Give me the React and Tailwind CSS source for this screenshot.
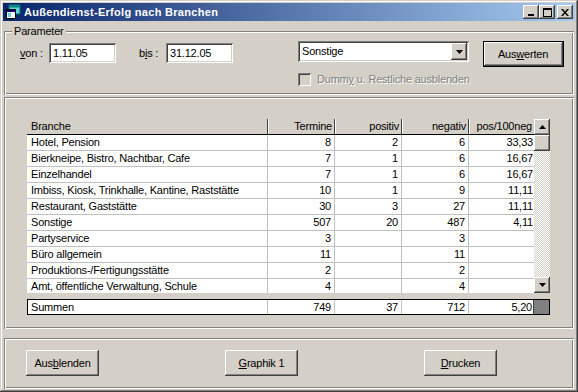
import React from "react";

const raised =
  "shadow-[inset_-1px_-1px_#404040,inset_1px_1px_#ffffff,inset_-2px_-2px_#808080,inset_2px_2px_#d4d0c8]";
const sunken =
  "shadow-[inset_1px_1px_#808080,inset_-1px_-1px_#ffffff,inset_2px_2px_#404040,inset_-2px_-2px_#d4d0c8]";
const etched =
  "shadow-[inset_1px_1px_#808080,inset_-1px_-1px_#ffffff,inset_2px_2px_#ffffff,inset_-2px_-2px_#808080]";

const rows = [
  ["Hotel, Pension", "8", "2", "6", "33,33"],
  ["Bierkneipe, Bistro, Nachtbar, Cafe", "7", "1", "6", "16,67"],
  ["Einzelhandel", "7", "1", "6", "16,67"],
  ["Imbiss, Kiosk, Trinkhalle, Kantine, Raststätte", "10", "1", "9", "11,11"],
  ["Restaurant, Gaststätte", "30", "3", "27", "11,11"],
  ["Sonstige", "507", "20", "487", "4,11"],
  ["Partyservice", "3", "", "3", ""],
  ["Büro allgemein", "11", "", "11", ""],
  ["Produktions-/Fertigungsstätte", "2", "", "2", ""],
  ["Amt, öffentliche Verwaltung, Schule", "4", "", "4", ""],
];

function Btn({ children, className = "" }) {
  return (
    <div
      className={`flex items-center justify-center bg-[#d4d0c8] text-black ${raised} ${className}`}
    >
      {children}
    </div>
  );
}

function Arrow({ down }) {
  return (
    <svg width="7" height="4" viewBox="0 0 7 4">
      {down ? (
        <polygon points="0,0 7,0 3.5,4" fill="#000" />
      ) : (
        <polygon points="0,4 7,4 3.5,0" fill="#000" />
      )}
    </svg>
  );
}

export default function App() {
  return (
    <div
      className={`w-[578px] h-[392px] bg-[#d4d0c8] p-[3px] flex flex-col font-['Liberation_Sans',Arial,sans-serif] text-[11px] leading-[13px] tracking-[-0.2px] text-black overflow-hidden shadow-[inset_-1px_-1px_#404040,inset_1px_1px_#d4d0c8,inset_-2px_-2px_#808080,inset_2px_2px_#ffffff]`}
    >
      {/* Title bar */}
      <div className="h-[18px] flex items-center bg-[linear-gradient(to_right,#0a246a,#a6caf0)] pl-[2px] pr-[2px]">
        <svg width="16" height="16" viewBox="0 0 16 16" className="shrink-0">
          <rect x="4" y="1" width="11" height="9" fill="#5fd3d3" stroke="#006b6b" strokeWidth="1" />
          <rect x="4.5" y="1.5" width="10" height="2" fill="#008080" />
          <rect x="1.5" y="5.5" width="9" height="9" fill="#ffffff" stroke="#000" strokeWidth="1" />
          <rect x="2" y="6" width="8" height="2" fill="#000080" />
          <rect x="3" y="9" width="3" height="4" fill="#5fd3d3" />
        </svg>
        <span className="ml-[3px] text-white font-bold text-[11px] tracking-[0.3px]">
          Außendienst-Erfolg nach Branchen
        </span>
        <div className="ml-auto flex items-center">
          <Btn className="w-[16px] h-[14px]">
            <div className="w-[6px] h-[2px] bg-black mt-[6px] mr-[1px]" />
          </Btn>
          <Btn className="w-[16px] h-[14px]">
            <div className="w-[9px] h-[9px] border border-black border-t-2" />
          </Btn>
          <Btn className="w-[16px] h-[14px] ml-[2px]">
            <svg width="8" height="7" viewBox="0 0 8 7">
              <path d="M0 0h2l2 2.5L6 0h2L5 3.5 8 7H6L4 4.5 2 7H0l3-3.5z" fill="#000" />
            </svg>
          </Btn>
        </div>
      </div>

      {/* Parameter group */}
      <div className={`relative mt-[10px] mx-[1px] h-[64px] ${etched} flex pl-[16px] pt-[10px]`}>
        <span className="absolute left-[8px] -top-[6px] bg-[#d4d0c8] px-[2px]">Parameter</span>
        <div className="flex items-center h-[20px] mt-[2px]">
          <span className="w-[29px]">
            <span className="underline">v</span>on :
          </span>
          <div className={`w-[67px] h-[20px] bg-white ${sunken} flex items-center pl-[4px]`}>
            1.11.05
          </div>
          <span className="w-[27px] ml-[23px]">
            b<span className="underline">i</span>s :
          </span>
          <div className={`w-[67px] h-[20px] bg-white ${sunken} flex items-center pl-[4px]`}>
            31.12.05
          </div>
        </div>
        <div className="ml-[65px] flex flex-col">
          <div className={`w-[171px] h-[21px] bg-white ${sunken} flex items-center pl-[4px] pr-[2px]`}>
            <span>Sonstige</span>
            <Btn className="ml-auto w-[16px] h-[17px]">
              <Arrow down />
            </Btn>
          </div>
          <div className="flex items-center mt-[11px]">
            <div className={`w-[13px] h-[13px] bg-[#d4d0c8] ${sunken}`} />
            <span className="ml-[6px] text-[#808080] [text-shadow:1px_1px_0_#ffffff]">
              Dumm<span className="underline">y</span> u. Restliche ausblenden
            </span>
          </div>
        </div>
        <div className="ml-[13px] w-[81px] h-[26px] border border-black">
          <Btn className="w-full h-full">
            Aus<span className="underline">w</span>erten
          </Btn>
        </div>
      </div>

      {/* Grid panel */}
      <div className={`mt-[2px] mx-[1px] h-[232px] ${etched} pl-[23px] pt-[22px] flex flex-col`}>
        <div className="flex">
          <div className="w-[507px] flex flex-col">
            <div className="flex h-[16px] bg-[#d4d0c8] border-b border-black">
              <div className="w-[241px] pl-[4px] border-r border-[#404040] flex items-center">Branche</div>
              <div className="w-[67px] pr-[2px] border-r border-[#404040] flex items-center justify-end shadow-[inset_1px_0_#ffffff]">Termine</div>
              <div className="w-[67px] pr-[2px] border-r border-[#404040] flex items-center justify-end shadow-[inset_1px_0_#ffffff]">positiv</div>
              <div className="w-[67px] pr-[2px] border-r border-[#404040] flex items-center justify-end shadow-[inset_1px_0_#ffffff]">negativ</div>
              <div className="w-[65px] pr-[2px] flex items-center justify-end shadow-[inset_1px_0_#ffffff]">pos/100neg</div>
            </div>
            <div className="h-[158px] overflow-hidden bg-white">
              {rows.map((r, i) => (
                <div key={i} className="flex h-[16px] border-b border-[#c0c0c0]">
                  <div className="w-[241px] pl-[4px] border-r border-[#c0c0c0] flex items-center whitespace-nowrap">{r[0]}</div>
                  <div className="w-[67px] pr-[3px] border-r border-[#c0c0c0] flex items-center justify-end">{r[1]}</div>
                  <div className="w-[67px] pr-[3px] border-r border-[#c0c0c0] flex items-center justify-end">{r[2]}</div>
                  <div className="w-[67px] pr-[3px] border-r border-[#c0c0c0] flex items-center justify-end">{r[3]}</div>
                  <div className="w-[65px] pr-[1px] flex items-center justify-end">{r[4]}</div>
                </div>
              ))}
            </div>
          </div>
          <div className="w-[16px] h-[174px] flex flex-col">
            <Btn className="h-[16px]">
              <Arrow />
            </Btn>
            <Btn className="h-[16px]" />
            <div className="flex-1 bg-[repeating-conic-gradient(#ffffff_0%_25%,#d4d0c8_0%_50%)] [background-size:2px_2px]" />
            <Btn className="h-[16px]">
              <Arrow down />
            </Btn>
          </div>
        </div>
        <div className="mt-[6px] w-[523px] h-[16px] border border-black bg-white flex">
          <div className="w-[240px] pl-[3px] border-r border-[#c0c0c0] flex items-center">Summen</div>
          <div className="w-[67px] pr-[3px] border-r border-[#c0c0c0] flex items-center justify-end">749</div>
          <div className="w-[67px] pr-[3px] border-r border-[#c0c0c0] flex items-center justify-end">37</div>
          <div className="w-[67px] pr-[3px] border-r border-[#c0c0c0] flex items-center justify-end">712</div>
          <div className="w-[65px] pr-[1px] border-r border-[#404040] flex items-center justify-end">5,20</div>
          <div className="flex-1 bg-[#808080]" />
        </div>
      </div>

      {/* Bottom panel */}
      <div className={`mt-[9px] mx-[1px] h-[51px] ${etched} flex pl-[22px] pt-[12px] gap-[126px]`}>
        <Btn className="w-[73px] h-[26px]">
          Aus<span className="underline">b</span>lenden
        </Btn>
        <Btn className="w-[73px] h-[26px]">
          <span className="underline">G</span>raphik 1
        </Btn>
        <Btn className="w-[73px] h-[26px]">
          <span className="underline">D</span>rucken
        </Btn>
      </div>
    </div>
  );
}
